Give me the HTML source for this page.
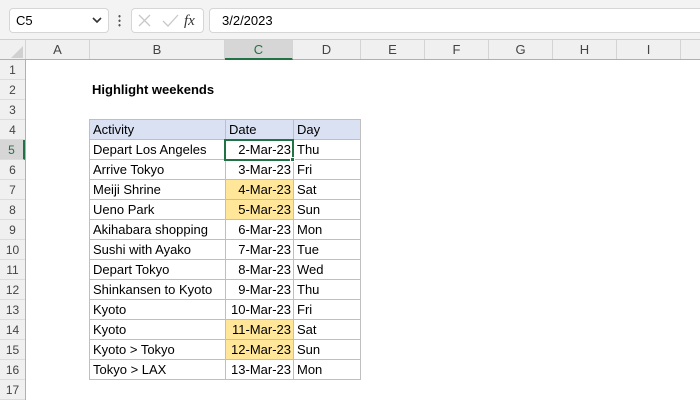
<!DOCTYPE html><html><head><style>
body{margin:0;width:700px;height:400px;overflow:hidden;background:#fff;font-family:"Liberation Sans",Calibri,sans-serif;position:relative}
.a{position:absolute;box-sizing:border-box}
.t{font-size:13px;color:#000;line-height:20px;white-space:nowrap}
.ch{font-size:13px;color:#444;text-align:center;line-height:19px;border-right:1px solid #d4d4d4}
.rh{font-size:12px;color:#444;text-align:center;line-height:20px;width:25px;left:0;border-bottom:1px solid #dcdcdc}
</style></head><body>
<div class="a" style="left:0;top:0;width:700px;height:40px;background:#f3f3f3;border-bottom:1px solid #d0d0d0"></div>
<div class="a" style="left:9px;top:8px;width:100px;height:25px;background:#fff;border:1px solid #d6d6d6;border-radius:4px;font-size:13px;line-height:23px;padding-left:6px">C5</div>
<svg class="a" style="left:92px;top:16px" width="10" height="8"><path d="M1 2 L5 6 L9 2" stroke="#333" stroke-width="1.6" fill="none"/></svg>
<div class="a" style="left:118px;top:14px;width:3px;height:13px;background:radial-gradient(circle,#555 1px,transparent 1.3px) 0 0/3px 4.5px"></div>
<div class="a" style="left:131px;top:8px;width:73px;height:25px;background:#fff;border:1px solid #d6d6d6;border-radius:4px"></div>
<svg class="a" style="left:136px;top:12px" width="66" height="18"><path d="M3 3 L14 14 M14 3 L3 14" stroke="#c8c8c8" stroke-width="1.3"/><path d="M27 9 L32 14 L42 3" stroke="#c8c8c8" stroke-width="1.3" fill="none"/><text x="48" y="13" font-family="Liberation Serif" font-style="italic" font-size="15" fill="#333">fx</text></svg>
<div class="a" style="left:209px;top:8px;width:500px;height:25px;background:#fff;border:1px solid #d6d6d6;border-radius:4px;font-size:13px;line-height:23px;padding-left:12px">3/2/2023</div>
<div class="a" style="left:0;top:40px;width:700px;height:20px;background:#f0f0f0;border-bottom:1px solid #b0b0b0"></div>
<svg class="a" style="left:10px;top:45px" width="14" height="14"><path d="M13 1 L13 13 L1 13 Z" fill="#d0d0d0"/></svg>
<div class="a ch" style="left:0;top:40px;width:26px;height:19px"></div>
<div class="a ch" style="left:26px;top:40px;width:64px;height:19px">A</div>
<div class="a ch" style="left:90px;top:40px;width:135px;height:19px">B</div>
<div class="a ch" style="left:225px;top:40px;width:68px;height:20px;background:#d6d6d6;border-bottom:2px solid #217346;color:#217346">C</div>
<div class="a ch" style="left:293px;top:40px;width:68px;height:19px">D</div>
<div class="a ch" style="left:361px;top:40px;width:64px;height:19px">E</div>
<div class="a ch" style="left:425px;top:40px;width:64px;height:19px">F</div>
<div class="a ch" style="left:489px;top:40px;width:64px;height:19px">G</div>
<div class="a ch" style="left:553px;top:40px;width:64px;height:19px">H</div>
<div class="a ch" style="left:617px;top:40px;width:64px;height:19px">I</div>
<div class="a" style="left:0;top:60px;width:26px;height:340px;background:#f0f0f0;border-right:1px solid #b0b0b0"></div>
<div id="rows"></div>
<div class="a t" style="left:92px;top:80px;font-weight:bold">Highlight weekends</div>
<div id="tbl"></div>
<script>
var r='';for(var i=1;i<=17;i++){var s=i==5?'background:#d6d6d6;color:#217346;border-right:2px solid #217346;':'';r+='<div class="a rh" style="top:'+(40+i*20)+'px;height:20px;'+s+'">'+i+'</div>'}
document.getElementById('rows').outerHTML=r;
var d=[["Depart Los Angeles","2-Mar-23","Thu"],["Arrive Tokyo","3-Mar-23","Fri"],["Meiji Shrine","4-Mar-23","Sat",1],["Ueno Park","5-Mar-23","Sun",1],["Akihabara shopping","6-Mar-23","Mon"],["Sushi with Ayako","7-Mar-23","Tue"],["Depart Tokyo","8-Mar-23","Wed"],["Shinkansen to Kyoto","9-Mar-23","Thu"],["Kyoto","10-Mar-23","Fri"],["Kyoto","11-Mar-23","Sat",1],["Kyoto > Tokyo","12-Mar-23","Sun",1],["Tokyo > LAX","13-Mar-23","Mon"]];
var b='1px solid #bfbfbf';var h='';
function c(x,y,w,txt,st){return '<div class="a t" style="left:'+x+'px;top:'+y+'px;width:'+w+'px;height:21px;border:'+b+';padding:0 3px;'+st+'">'+txt+'</div>'}
h+=c(89,119,137,'Activity','background:#d9e1f2')+c(225,119,69,'Date','background:#d9e1f2')+c(293,119,68,'Day','background:#d9e1f2');
d.forEach(function(e,k){var y=139+k*20;h+=c(89,y,137,e[0].replace('>','&gt;'),'')+c(225,y,69,e[1],'text-align:right;padding-right:2px;'+(e[3]?'background:#ffe699':''))+c(293,y,68,e[2],'')});
h+='<div class="a" style="left:224px;top:139px;width:70px;height:22px;border:2px solid #217346"></div><div class="a" style="left:290px;top:157px;width:5px;height:5px;background:#217346;border:1px solid #fff"></div>';
document.getElementById('tbl').outerHTML=h;
</script>
</body></html>
